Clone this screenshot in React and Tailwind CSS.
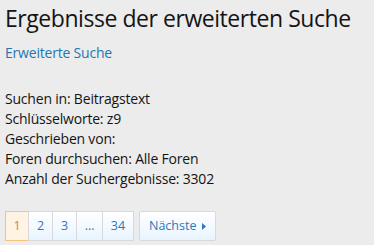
export default function App() {
  const pages = ["2", "3", "…", "34"];
  return (
    <main
      className="min-h-screen bg-[#ececec] px-[5px] pt-[2px] text-[#141414]"
      style={{ fontFamily: '"Open Sans", "Noto Sans", sans-serif' }}
    >
      <h1 className="whitespace-nowrap text-[23px] leading-[32px] tracking-[-0.45px]">Ergebnisse der erweiterten Suche</h1>
      <a href="#" className="mt-[9px] block text-[14px] leading-[20px] text-[#2577b1] tracking-[-0.2px]">
        Erweiterte Suche
      </a>
      <div className="mt-[26px] text-[14px] leading-[20px] tracking-[-0.2px]">
        <p>Suchen in: Beitragstext</p>
        <p>Schlüsselworte: z9</p>
        <p>Geschrieben von:</p>
        <p>Foren durchsuchen: Alle Foren</p>
        <p>Anzahl der Suchergebnisse: 3302</p>
      </div>
      <nav className="mt-[22px] flex items-center gap-[5px] text-[12.5px]">
        <div className="flex">
          <span className="flex h-[30px] w-[24px] items-center justify-center border border-[#f5c37c] bg-[#fff3e3] text-[#d0893a]">
            1
          </span>
          {pages.map((p) => (
            <a
              key={p}
              href="#"
              className={`-ml-px flex h-[30px] items-center justify-center border border-[#d7d9dc] bg-gradient-to-b from-white to-[#e9f4ff] text-[#2a78c0] ${p === "34" ? "w-[32px]" : p === "…" ? "w-[27px]" : "w-[25px]"}`}
            >
              {p}
            </a>
          ))}
        </div>
        <a
          href="#"
          className="flex h-[30px] items-center gap-[6px] rounded-[2px] border border-[#d7d9dc] bg-gradient-to-b from-white to-[#e9f4ff] pl-[9px] pr-[9px] text-[#2a78c0]"
        >
          Nächste
          <svg width="4" height="7" viewBox="0 0 4 7">
            <path d="M0 0 L4 3.5 L0 7 Z" fill="#2a78c0" />
          </svg>
        </a>
      </nav>
    </main>
  );
}
